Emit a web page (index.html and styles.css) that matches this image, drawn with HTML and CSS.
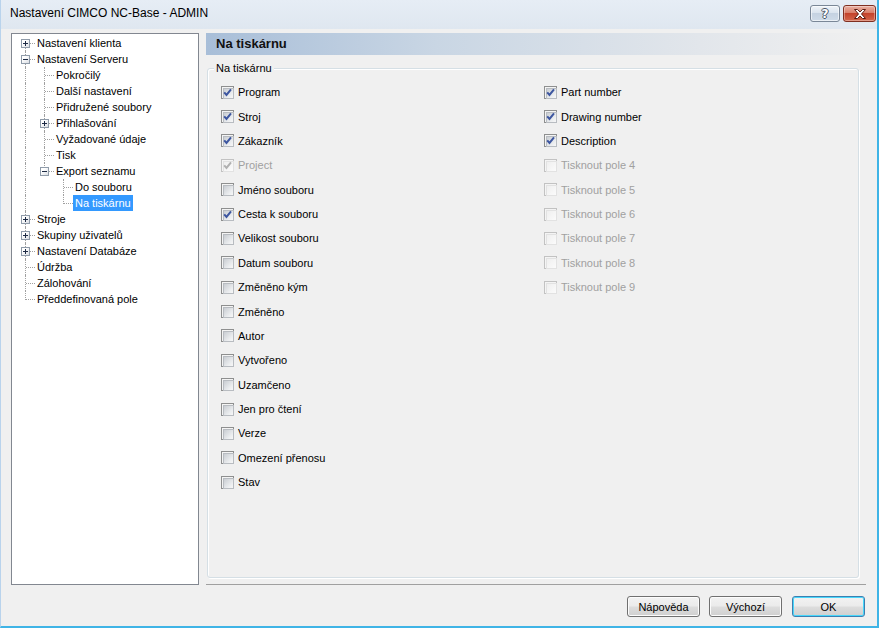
FILE: index.html
```html
<!DOCTYPE html>
<html lang="cs">
<head>
<meta charset="utf-8">
<title>Nastavení CIMCO NC-Base - ADMIN</title>
<link rel="stylesheet" href="styles.css">
</head>
<body>
<div class="window">
  <div class="titlebar">
    <span class="title">Nastavení CIMCO NC-Base - ADMIN</span>
    <div class="caption">
      <span class="cap help"><span class="q">?</span></span>
      <span class="cap close">
        <svg width="14" height="10" viewBox="0 0 14 10"><path d="M1.5 0.5h3l2.5 2.5 2.5-2.5h3l-4 4.5 4 4.5h-3l-2.5-2.5-2.5 2.5h-3l4-4.5z" fill="#fff" stroke="#5a1c12" stroke-width="1" stroke-linejoin="round"/></svg>
      </span>
    </div>
  </div>
  <div class="client">
    <div class="main">
      <div class="tree">
        <div class="row"><span class="c first"><i class="exp plus"></i></span><span class="lbl">Nastavení klienta</span></div>
        <div class="row"><span class="c tee"><i class="exp"></i></span><span class="lbl">Nastavení Serveru</span></div>
        <div class="row"><span class="c pipe"></span><span class="c tee"></span><span class="lbl">Pokročilý</span></div>
        <div class="row"><span class="c pipe"></span><span class="c tee"></span><span class="lbl">Další nastavení</span></div>
        <div class="row"><span class="c pipe"></span><span class="c tee"></span><span class="lbl">Přidružené soubory</span></div>
        <div class="row"><span class="c pipe"></span><span class="c tee"><i class="exp plus"></i></span><span class="lbl">Přihlašování</span></div>
        <div class="row"><span class="c pipe"></span><span class="c tee"></span><span class="lbl">Vyžadované údaje</span></div>
        <div class="row"><span class="c pipe"></span><span class="c tee"></span><span class="lbl">Tisk</span></div>
        <div class="row"><span class="c pipe"></span><span class="c elbow"><i class="exp"></i></span><span class="lbl">Export seznamu</span></div>
        <div class="row"><span class="c pipe"></span><span class="c"></span><span class="c tee"></span><span class="lbl">Do souboru</span></div>
        <div class="row"><span class="c pipe"></span><span class="c"></span><span class="c elbow"></span><span class="lbl sel">Na tiskárnu</span></div>
        <div class="row"><span class="c tee"><i class="exp plus"></i></span><span class="lbl">Stroje</span></div>
        <div class="row"><span class="c tee"><i class="exp plus"></i></span><span class="lbl">Skupiny uživatelů</span></div>
        <div class="row"><span class="c tee"><i class="exp plus"></i></span><span class="lbl">Nastavení Databáze</span></div>
        <div class="row"><span class="c tee"></span><span class="lbl">Údržba</span></div>
        <div class="row"><span class="c tee"></span><span class="lbl">Zálohování</span></div>
        <div class="row"><span class="c elbow"></span><span class="lbl">Předdefinovaná pole</span></div>
      </div>
      <div class="panel">
        <div class="header">Na tiskárnu</div>
        <div class="group">
          <span class="legend">Na tiskárnu</span>
          <div class="cols">
            <div class="col">
              <div class="chk"><span class="cb on"><svg width="13" height="13" viewBox="0 0 13 13"><path d="M3.2 6.3l2.3 2.6 4.5-5.6" fill="none" stroke="#3d56a0" stroke-width="2"/></svg></span>Program</div>
              <div class="chk"><span class="cb on"><svg width="13" height="13" viewBox="0 0 13 13"><path d="M3.2 6.3l2.3 2.6 4.5-5.6" fill="none" stroke="#3d56a0" stroke-width="2"/></svg></span>Stroj</div>
              <div class="chk"><span class="cb on"><svg width="13" height="13" viewBox="0 0 13 13"><path d="M3.2 6.3l2.3 2.6 4.5-5.6" fill="none" stroke="#3d56a0" stroke-width="2"/></svg></span>Zákazník</div>
              <div class="chk dis"><span class="cb on"><svg width="13" height="13" viewBox="0 0 13 13"><path d="M3.2 6.3l2.3 2.6 4.5-5.6" fill="none" stroke="#b0b0b0" stroke-width="2"/></svg></span>Project</div>
              <div class="chk"><span class="cb"></span>Jméno souboru</div>
              <div class="chk"><span class="cb on"><svg width="13" height="13" viewBox="0 0 13 13"><path d="M3.2 6.3l2.3 2.6 4.5-5.6" fill="none" stroke="#3d56a0" stroke-width="2"/></svg></span>Cesta k souboru</div>
              <div class="chk"><span class="cb"></span>Velikost souboru</div>
              <div class="chk"><span class="cb"></span>Datum souboru</div>
              <div class="chk"><span class="cb"></span>Změněno kým</div>
              <div class="chk"><span class="cb"></span>Změněno</div>
              <div class="chk"><span class="cb"></span>Autor</div>
              <div class="chk"><span class="cb"></span>Vytvořeno</div>
              <div class="chk"><span class="cb"></span>Uzamčeno</div>
              <div class="chk"><span class="cb"></span>Jen pro čtení</div>
              <div class="chk"><span class="cb"></span>Verze</div>
              <div class="chk"><span class="cb"></span>Omezení přenosu</div>
              <div class="chk"><span class="cb"></span>Stav</div>
            </div>
            <div class="col">
              <div class="chk"><span class="cb on"><svg width="13" height="13" viewBox="0 0 13 13"><path d="M3.2 6.3l2.3 2.6 4.5-5.6" fill="none" stroke="#3d56a0" stroke-width="2"/></svg></span>Part number</div>
              <div class="chk"><span class="cb on"><svg width="13" height="13" viewBox="0 0 13 13"><path d="M3.2 6.3l2.3 2.6 4.5-5.6" fill="none" stroke="#3d56a0" stroke-width="2"/></svg></span>Drawing number</div>
              <div class="chk"><span class="cb on"><svg width="13" height="13" viewBox="0 0 13 13"><path d="M3.2 6.3l2.3 2.6 4.5-5.6" fill="none" stroke="#3d56a0" stroke-width="2"/></svg></span>Description</div>
              <div class="chk dis"><span class="cb"></span>Tisknout pole 4</div>
              <div class="chk dis"><span class="cb"></span>Tisknout pole 5</div>
              <div class="chk dis"><span class="cb"></span>Tisknout pole 6</div>
              <div class="chk dis"><span class="cb"></span>Tisknout pole 7</div>
              <div class="chk dis"><span class="cb"></span>Tisknout pole 8</div>
              <div class="chk dis"><span class="cb"></span>Tisknout pole 9</div>
            </div>
          </div>
        </div>
      </div>
    </div>
    <div class="footer">
      <button class="btn">Nápověda</button>
      <button class="btn">Výchozí</button>
      <button class="btn def">OK</button>
    </div>
  </div>
</div>
</body>
</html>
```

FILE: styles.css
```css
* { box-sizing: border-box; }
html, body { margin: 0; padding: 0; }
body {
  width: 879px;
  height: 628px;
  overflow: hidden;
  font-family: "Liberation Sans", Arial, sans-serif;
  font-size: 11px;
  color: #000;
  background: #f0f0f0;
}
.window {
  width: 879px;
  height: 628px;
  display: flex;
  flex-direction: column;
  background: #f0f0f0;
  border-left: 1px solid #b9d3ec;
  border-right: 2px solid #3fb4e6;
  border-bottom: 2px solid #3fb4e6;
}
.titlebar {
  height: 29px;
  flex: none;
  display: flex;
  align-items: center;
  justify-content: space-between;
  padding-left: 9px;
  background: linear-gradient(#e6edf5, #dfe7f0);
}
.title {
  font-size: 12px;
  color: #000;
  padding-bottom: 3px;
}
.caption {
  display: flex;
  gap: 3px;
  align-self: flex-start;
  margin-top: 5px;
  margin-right: 1px;
}
.cap {
  height: 17px;
  border-radius: 3px;
  display: flex;
  align-items: center;
  justify-content: center;
}
.help {
  width: 30px;
  border: 1px solid #7a8797;
  background: linear-gradient(#eef3f9 0%, #dbe4ee 45%, #c5d2e1 50%, #cfdbe8 100%);
  box-shadow: inset 0 0 0 1px rgba(255,255,255,0.6);
}
.q {
  font-family: "DejaVu Sans", sans-serif;
  font-weight: bold;
  font-size: 12px;
  color: #fff;
  text-shadow: -1px 0 #4b5566, 1px 0 #4b5566, 0 -1px #4b5566, 0 1px #4b5566;
  line-height: 12px;
}
.close {
  width: 33px;
  border: 1px solid #7f2f21;
  background: linear-gradient(#eab1a4 0%, #d9806b 45%, #c4432b 50%, #d4674c 100%);
  box-shadow: inset 0 0 0 1px rgba(255,255,255,0.35);
}
.client {
  flex: 1;
  display: flex;
  flex-direction: column;
  padding: 4px 10px 0 10px;
}
.main {
  display: flex;
  gap: 7px;
  height: 552px;
}
.tree {
  width: 188px;
  height: 552px;
  background: #fff;
  border: 1px solid #828790;
  padding: 1px 0 0 4px;
}
.row {
  display: flex;
  height: 16px;
  align-items: center;
}
.c {
  width: 19px;
  height: 16px;
  flex: none;
  position: relative;
}
.c.pipe::before, .c.tee::before, .c.elbow::before, .c.first::before {
  content: "";
  position: absolute;
  left: 9px;
  top: 0;
  height: 16px;
  border-left: 1px dotted #a0a0a0;
}
.c.elbow::before { height: 9px; }
.c.first::before { top: 8px; height: 8px; }
.c.tee::after, .c.elbow::after, .c.first::after {
  content: "";
  position: absolute;
  left: 10px;
  top: 8px;
  width: 9px;
  border-top: 1px dotted #a0a0a0;
}
.exp {
  position: absolute;
  left: 5px;
  top: 4px;
  width: 9px;
  height: 9px;
  border: 1px solid #8f9ba9;
  background: linear-gradient(135deg, #ffffff 30%, #d9dde3 100%);
  z-index: 1;
}
.exp::before {
  content: "";
  position: absolute;
  left: 1px;
  top: 3px;
  width: 5px;
  height: 1px;
  background: #1d2a44;
}
.exp.plus::after {
  content: "";
  position: absolute;
  left: 3px;
  top: 1px;
  width: 1px;
  height: 5px;
  background: #1d2a44;
}
.lbl {
  height: 16px;
  line-height: 16px;
  padding: 0 2px;
  white-space: nowrap;
}
.lbl.sel {
  background: #3399ff;
  color: #fff;
}
.panel {
  width: 660px;
  height: 552px;
  display: flex;
  flex-direction: column;
  border-bottom: 1px solid #a0a0a0;
}
.header {
  width: 657px;
  height: 22px;
  flex: none;
  padding-left: 10px;
  line-height: 22px;
  font-size: 13px;
  font-weight: bold;
  color: #111;
  background: linear-gradient(90deg, #a8bed8 0%, #c9d6e4 35%, #e2e6eb 75%, #f0f0f0 100%);
}
.group {
  position: relative;
  margin: 13px 0 0 1px;
  width: 652px;
  height: 510px;
  border: 1px solid #d5dfe5;
  border-radius: 3px;
  box-shadow: inset 1px 1px 0 #fff, 1px 1px 0 #fff;
}
.legend {
  position: absolute;
  left: 6px;
  top: -8px;
  padding: 0 2px;
  line-height: 14px;
  background: #f0f0f0;
}
.cols {
  display: flex;
  padding: 11px 0 0 13px;
}
.col {
  flex: none;
  width: 323px;
}
.chk {
  height: 24.375px;
  display: flex;
  align-items: center;
  gap: 4px;
  white-space: nowrap;
}
.chk.dis { color: #a0a0a0; }
.cb {
  width: 13px;
  height: 13px;
  flex: none;
  position: relative;
  border: 1px solid #8e8f8f;
  background: #f4f4f4;
}
.cb::before {
  content: "";
  position: absolute;
  left: 1px;
  top: 1px;
  width: 9px;
  height: 9px;
  border: 1px solid #b8bcc1;
  background: linear-gradient(135deg, #c9cdd2 0%, #eceef0 70%, #f7f7f7 100%);
}
.cb svg {
  position: absolute;
  left: -1px;
  top: -1px;
  z-index: 1;
}
.chk.dis .cb { border-color: #c2c2c2; background: #f4f4f4; }
.chk.dis .cb::before { border-color: #e2e2e2; background: linear-gradient(135deg, #efefef, #fbfbfb); }
.footer {
  flex: 1;
  display: flex;
  justify-content: flex-end;
  align-items: flex-start;
  gap: 9px;
  padding: 11px 2px 0 0;
}
.btn {
  width: 73px;
  height: 21px;
  padding: 0;
  font-family: "Liberation Sans", Arial, sans-serif;
  font-size: 11px;
  color: #000;
  border: 1px solid #707070;
  border-radius: 3px;
  background: linear-gradient(#f2f2f2 0%, #ebebeb 48%, #dddddd 52%, #cfcfcf 100%);
  box-shadow: inset 0 0 0 1px #fcfcfc;
}
.btn.def {
  border-color: #3c7fb1;
  box-shadow: inset 0 0 0 1px #48d7fb;
  margin-left: 1px;
}
```
